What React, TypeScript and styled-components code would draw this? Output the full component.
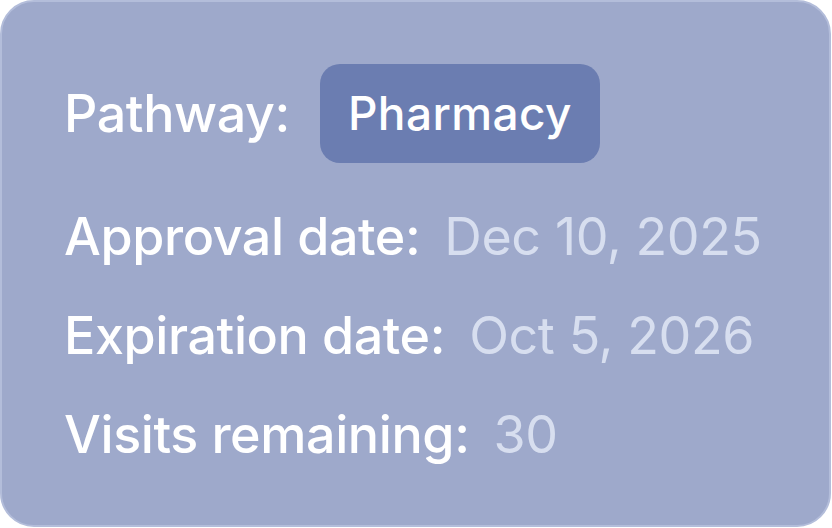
import React from 'react';
import styled, {createGlobalStyle} from 'styled-components';

const GlobalStyle = createGlobalStyle`
    html, body {
        margin: 0;
        padding: 0;
        background: #ffffff;
    }
    body {
        font-family: Inter, "Noto Sans", "Liberation Sans", sans-serif;
    }
`;

const Card = styled.div`
    box-sizing: border-box;
    display: flex;
    flex-direction: column;
    width: 831px;
    height: 527px;
    padding: 62px 62px;
    background-color: #9ea9cb;
    border: 2px solid #b3bdda;
    border-radius: 34px;
`;

const Row = styled.div<{ $first?: boolean }>`
    display: flex;
    align-items: center;
    gap: ${(props) => (props.$first ? '30px' : '24px')};
    margin-bottom: ${(props) => (props.$first ? '42px' : '36px')};
    font-size: 52px;
    line-height: 63px;
    letter-spacing: -0.4px;
    white-space: nowrap;
`;

const Label = styled.span`
    color: #ffffff;
    font-weight: 500;
`;

const Value = styled.span`
    color: #d7deef;
    font-weight: 400;
`;

const Pill = styled.span`
    display: inline-flex;
    align-items: center;
    height: 99px;
    padding: 0 28px;
    box-sizing: border-box;
    background-color: #6b7db1;
    border-radius: 20px;
    color: #ffffff;
    font-size: 46px;
    font-weight: 500;
    letter-spacing: 0.4px;
`;

interface DetailProps {
    label: string
    value: string
}

const Detail = ({label, value}: DetailProps) => (
    <Row>
        <Label>{label}</Label>
        <Value>{value}</Value>
    </Row>
);

const App = () => {
    return (
        <>
            <GlobalStyle />
            <Card>
                <Row $first>
                    <Label>Pathway:</Label>
                    <Pill>Pharmacy</Pill>
                </Row>
                <Detail label="Approval date:" value="Dec 10, 2025" />
                <Detail label="Expiration date:" value="Oct 5, 2026" />
                <Detail label="Visits remaining:" value="30" />
            </Card>
        </>
    );
}

export default App;
